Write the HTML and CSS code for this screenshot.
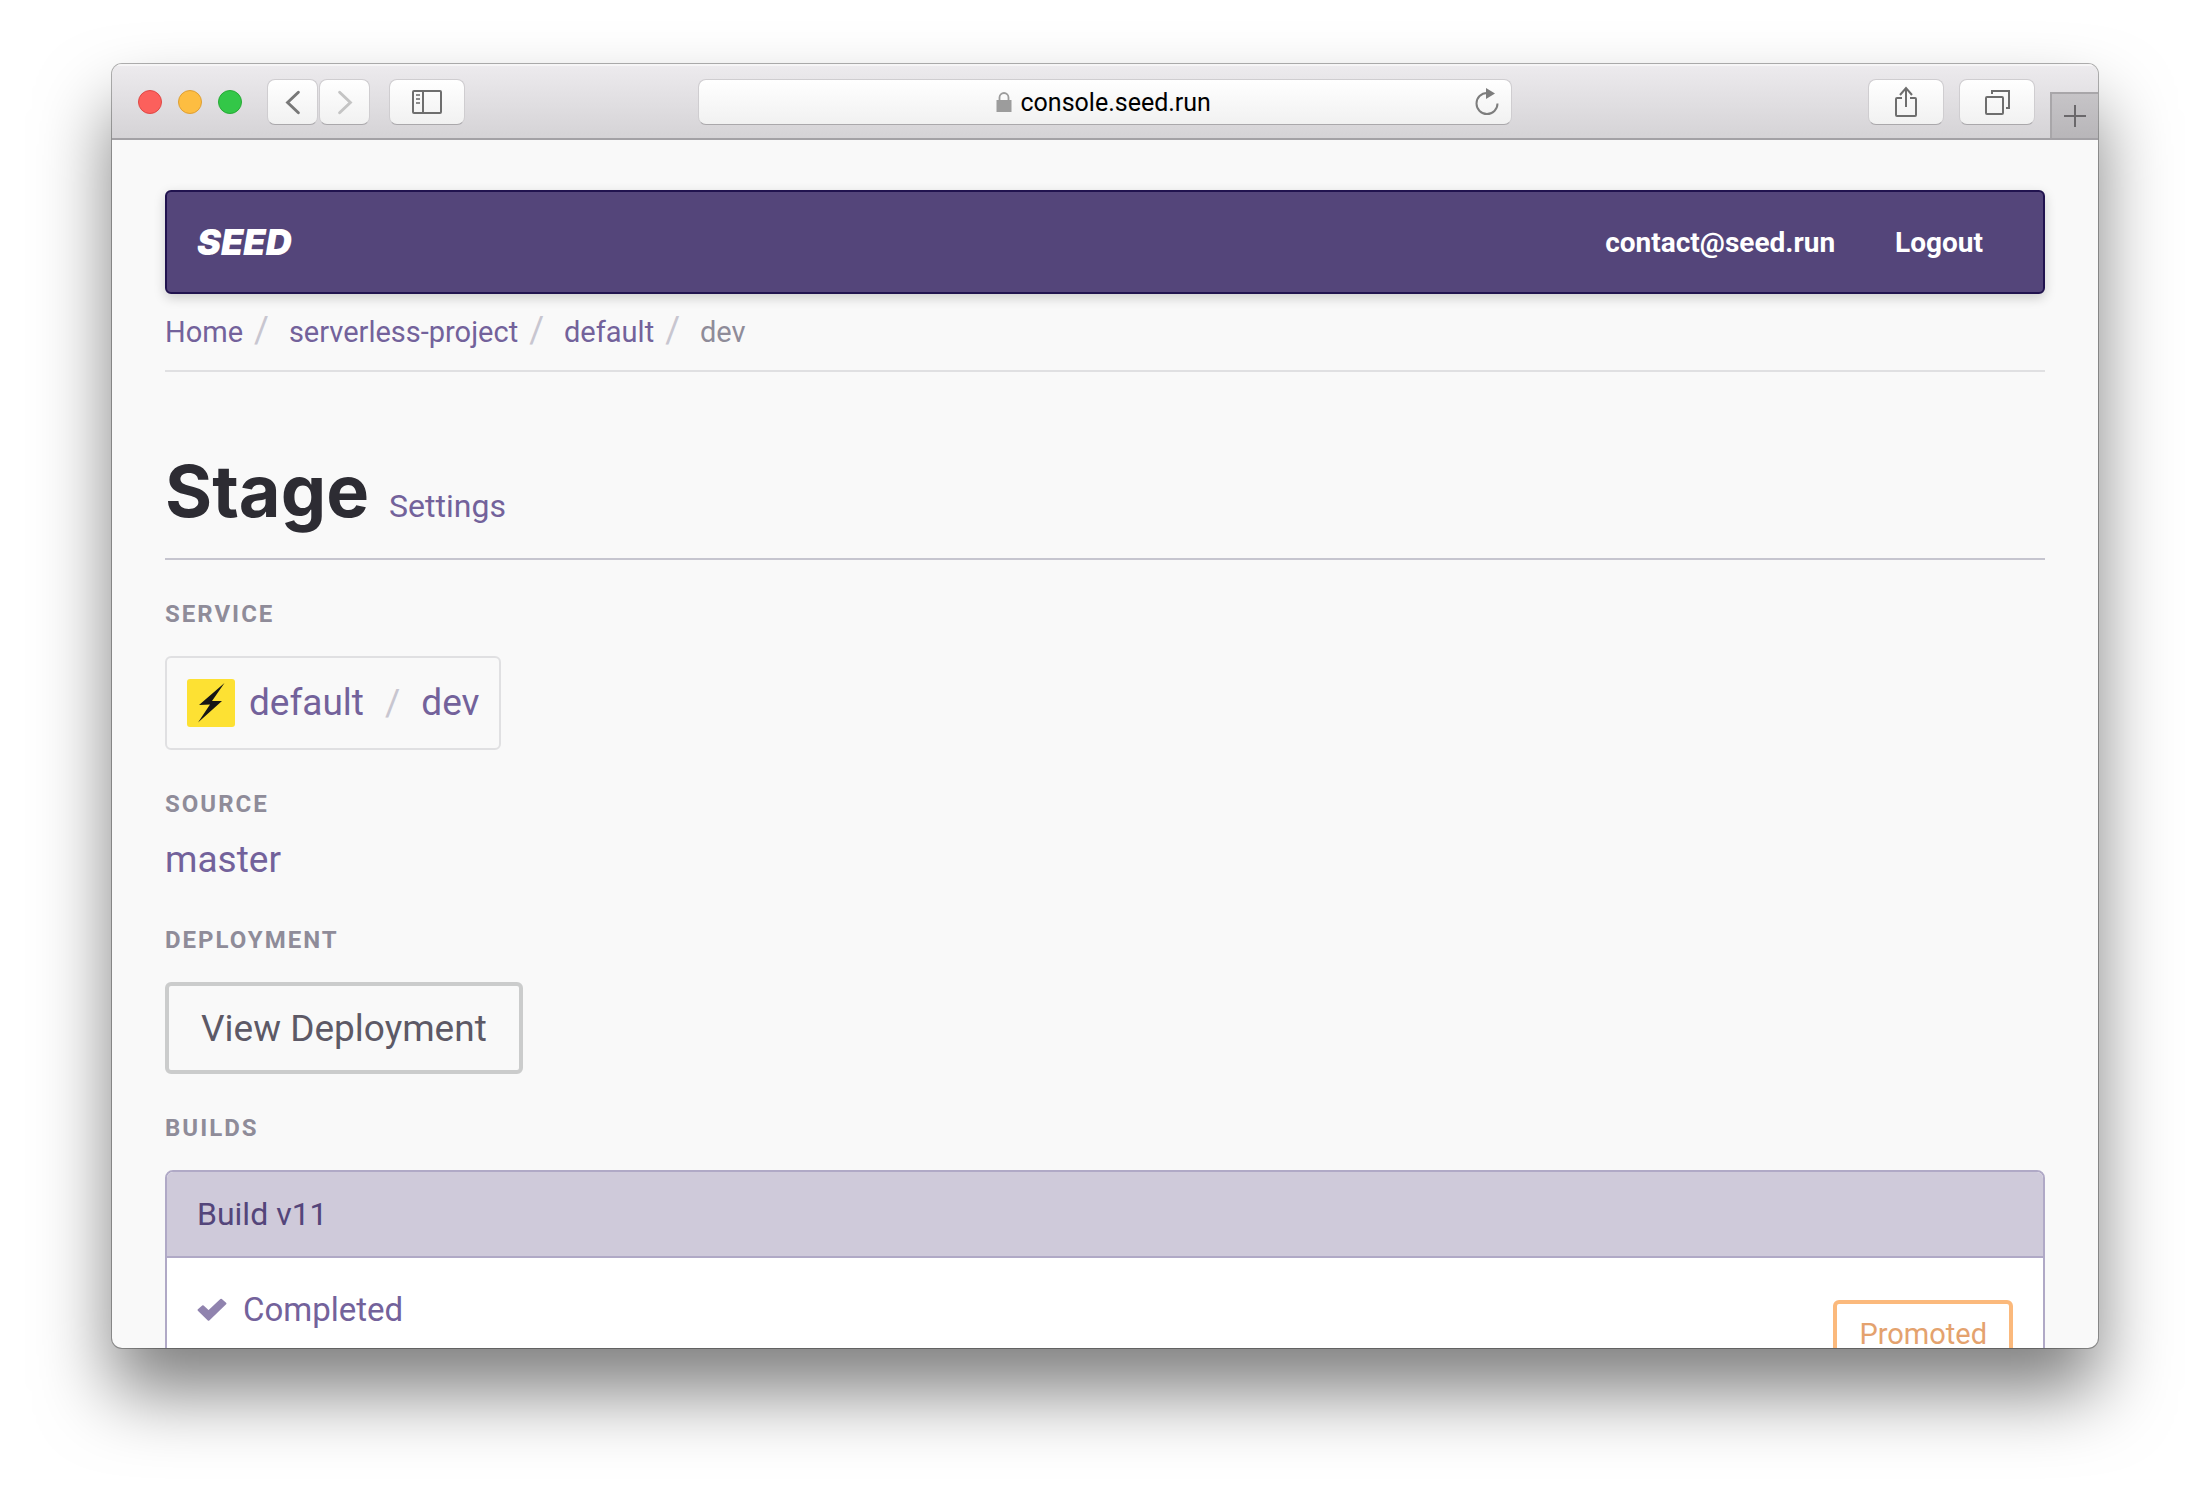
FILE: index.html
```
<!DOCTYPE html>
<html lang="en">
<head>
    <meta charset="UTF-8">
    <meta name="viewport" content="width=device-width, initial-scale=1.0">
    <title>Seed Console - Stage</title>
    <link rel="stylesheet" href="styles.css">
</head>
<body>
    <div class="window">
        <div class="toolbar">
            <div class="toolbar-side">
                <div class="lights">
                    <span class="light red"></span>
                    <span class="light yellow"></span>
                    <span class="light green"></span>
                </div>
                <div class="history">
                    <button class="tool-button small" aria-label="Back">
                        <svg width="50" height="44" viewBox="0 0 50 44" fill="none" stroke="#787878" stroke-width="3" stroke-linecap="round"><path d="M31 12L20 22.500L31 33"/></svg>
                    </button>
                    <button class="tool-button small" aria-label="Forward">
                        <svg width="50" height="44" viewBox="0 0 50 44" fill="none" stroke="#c4c4c4" stroke-width="3" stroke-linecap="round"><path d="M20 12L31 22.500L20 33"/></svg>
                    </button>
                </div>
                <button class="tool-button" aria-label="Sidebar">
                    <svg width="30" height="24" viewBox="0 0 30 24" fill="none" stroke="#6e6e6e" stroke-width="2"><rect x="1" y="1" width="28" height="22" rx="1"/><path d="M11 1v22"/><path d="M4 5h4M4 9h4M4 13h4" stroke="#8c8c8c"/></svg>
                </button>
            </div>
            <div class="address-bar">
                <div class="address">
                    <svg width="16" height="20" viewBox="0 0 16 20"><path d="M3.500 9V5.500a4.500 4.500 0 0 1 9 0V9" fill="none" stroke="#9c9c9c" stroke-width="1.800"/><rect x="0.500" y="8" width="15" height="12" fill="#9c9c9c"/></svg>
                    <input type="text" class="address-input" value="console.seed.run" aria-label="Address">
                </div>
                <button class="reload-button" aria-label="Reload">
                    <svg width="24" height="28" viewBox="0 0 24 28"><path d="M12 5a10.500 10.500 0 1 0 10.500 10.500" fill="none" stroke="#7d7d7d" stroke-width="2"/><path d="M11 0v11l9-5.500z" fill="#7d7d7d"/></svg>
                </button>
            </div>
            <div class="toolbar-side right">
                <button class="tool-button" aria-label="Share">
                    <svg width="24" height="32" viewBox="0 0 24 32" fill="none" stroke="#6e6e6e" stroke-width="2"><path d="M8 12H3a1 1 0 0 0-1 1v16a1 1 0 0 0 1 1h18a1 1 0 0 0 1-1V13a1 1 0 0 0-1-1h-5M12 21V3M6 9l6-7 6 7"/></svg>
                </button>
                <button class="tool-button" aria-label="Show tabs">
                    <svg width="26" height="26" viewBox="0 0 26 26" fill="none" stroke="#6e6e6e" stroke-width="2"><rect x="2" y="8" width="17" height="17" rx="1"/><path d="M8 5V2h17v17h-3"/></svg>
                </button>
                <button class="new-tab" aria-label="New tab">
                    <svg width="22" height="22" viewBox="0 0 22 22" stroke="#6a686b" stroke-width="2"><path d="M11 0v22M0 11h22"/></svg>
                </button>
            </div>
        </div>

        <div class="page">
            <nav class="navbar">
                <a href="#" class="brand">SEED</a>
                <div class="nav-links">
                    <a href="#">contact@seed.run</a>
                    <a href="#">Logout</a>
                </div>
            </nav>

            <div class="breadcrumb">
                <a href="#">Home</a>
                <span class="slash">/</span>
                <a href="#">serverless-project</a>
                <span class="slash">/</span>
                <a href="#">default</a>
                <span class="slash">/</span>
                <span class="current">dev</span>
            </div>

            <header class="page-header">
                <h1>Stage</h1>
                <a href="#">Settings</a>
            </header>

            <section class="section">
                <h2>Service</h2>
                <div class="service">
                    <svg class="service-icon" width="48" height="48" viewBox="0 0 48 48"><rect width="48" height="48" rx="3" fill="#fde133"/><path d="M37.500 4L12 26l11-0.500L11 43.500L35 22H25z" fill="#161616"/></svg>
                    <a href="#">default</a>
                    <span class="slash">/</span>
                    <a href="#">dev</a>
                </div>
            </section>

            <section class="section">
                <h2>Source</h2>
                <a href="#" class="source">master</a>
            </section>

            <section class="section">
                <h2>Deployment</h2>
                <button class="view-button">View Deployment</button>
            </section>

            <section class="section">
                <h2>Builds</h2>
                <div class="build">
                    <div class="build-header">Build v11</div>
                    <div class="build-body">
                        <a href="#" class="build-status">
                            <svg width="30" height="24" viewBox="0 0 28 22"><path d="M1.500 11L5.500 7.500L10.800 12.500L22.500 1.500L26.500 5L10.800 20z" fill="#9083ae" stroke="#9083ae" stroke-width="2" stroke-linejoin="round"/></svg>
                            Completed
                        </a>
                        <button class="promoted-button">Promoted</button>
                    </div>
                </div>
            </section>
        </div>
    </div>
</body>
</html>
```
FILE: styles.css
```
* {
    margin: 0;
    padding: 0;
    box-sizing: border-box;
    font-family: Roboto, 'Liberation Sans', sans-serif;
}

:root {
    --background: #f9f9f9;
    --purple: #73629b;
    --purple-dark: #54457a;
    --muted: #8f8c99;
    --slash: #c8c6d0;
}

body {
    background: #ffffff;
    height: 100vh;
    padding: 64px 112px 160px;
    overflow: hidden;
}

a {
    color: var(--purple);
    text-decoration: none;
}

button {
    cursor: pointer;
}

/* Browser window */
.window {
    height: 100%;
    display: flex;
    flex-direction: column;
    background: var(--background);
    border-radius: 10px;
    box-shadow: 0 0 0 1px rgba(0, 0, 0, 0.3), 0 44px 72px rgba(0, 0, 0, 0.5);
    overflow: hidden;
}

.toolbar {
    flex: none;
    display: flex;
    align-items: center;
    height: 76px;
    padding-top: 2px;
    background: linear-gradient(#edebee, #d5d3d6);
    border-bottom: 2px solid #a3a1a5;
    box-shadow: inset 0 2px 0 #f6f5f6;
}

.toolbar-side {
    flex: 1;
    height: 100%;
    display: flex;
    align-items: center;
    gap: 19px;
}

.toolbar-side.right {
    justify-content: flex-end;
    gap: 15px;
}

.lights {
    display: flex;
    gap: 16px;
    margin: 0 6px 0 26px;
}

.light {
    width: 24px;
    height: 24px;
    border-radius: 50%;
    border: 1px solid;
}

.red {
    background: #fc605c;
    border-color: #df4845;
}

.yellow {
    background: #fdbd41;
    border-color: #de9f34;
}

.green {
    background: #33c748;
    border-color: #27aa35;
}

.history {
    display: flex;
    gap: 1px;
}

.tool-button {
    display: flex;
    align-items: center;
    justify-content: center;
    width: 76px;
    height: 46px;
    background: linear-gradient(#ffffff, #f1f1f1);
    border: 1px solid #cfcdd0;
    border-bottom-color: #aaa8ab;
    border-radius: 8px;
}

.tool-button.small {
    width: 51px;
}

.address-bar {
    width: 41%;
    height: 46px;
    display: flex;
    align-items: center;
    background: linear-gradient(#ffffff, #f1f1f1);
    border: 1px solid #cfcdd0;
    border-bottom-color: #aaa8ab;
    border-radius: 8px;
    padding: 0 12px 0 36px;
}

.address {
    flex: 1;
    display: flex;
    align-items: center;
    justify-content: center;
    gap: 9px;
}

.address-input {
    width: 194px;
    padding-top: 2px;
    border: none;
    background: transparent;
    color: #000000;
    font-size: 25px;
    line-height: 32px;
}

.reload-button {
    display: flex;
    border: none;
    background: transparent;
}

.new-tab {
    align-self: flex-end;
    display: flex;
    align-items: center;
    justify-content: center;
    width: 48px;
    height: 46px;
    background: linear-gradient(#c6c4c7, #b8b6b9);
    border: 2px solid #a8a6a9;
    border-width: 2px 0 0 2px;
}

/* Console page */
.page {
    flex: 1;
    min-height: 0;
    overflow: hidden;
    padding: 50px 53px 0;
}

.navbar {
    display: flex;
    align-items: center;
    justify-content: space-between;
    height: 104px;
    padding: 0 60px 0 30px;
    background: var(--purple-dark);
    border: 2px solid #21134f;
    border-radius: 6px;
    box-shadow: 0 4px 12px rgba(0, 0, 0, 0.18);
}

.navbar a {
    color: #ffffff;
}

.brand {
    font-family: Inter, 'Liberation Sans', sans-serif;
    font-size: 36px;
    font-style: italic;
    font-weight: 900;
}

.nav-links {
    display: flex;
    gap: 60px;
    font-size: 28px;
    font-weight: 700;
}

.breadcrumb {
    display: flex;
    align-items: baseline;
    height: 78px;
    padding-top: 14px;
    border-bottom: 2px solid #e0e0e2;
    font-size: 29px;
    line-height: 44px;
}

.slash {
    color: var(--slash);
}

.breadcrumb .slash {
    margin: 0 20px 0 11px;
    font-size: 36px;
}

.current {
    color: var(--muted);
}

.page-header {
    display: flex;
    align-items: baseline;
    gap: 20px;
    padding: 76px 0 24px;
    border-bottom: 2px solid #c6c5cf;
    margin-bottom: 38px;
}

h1 {
    font-family: Inter, 'Liberation Sans', sans-serif;
    font-size: 72px;
    font-weight: 700;
    line-height: 86px;
    color: #2d2c33;
}

.page-header a {
    font-size: 32px;
}

.section {
    margin-bottom: 38px;
}

h2 {
    font-size: 24px;
    font-weight: 700;
    line-height: 32px;
    letter-spacing: 2px;
    text-transform: uppercase;
    color: var(--muted);
    margin-bottom: 26px;
}

.service {
    display: inline-flex;
    align-items: center;
    height: 94px;
    padding: 0 20px;
    border: 2px solid #e0e0e2;
    border-radius: 6px;
    font-size: 37px;
    line-height: 44px;
    vertical-align: top;
}

.service-icon {
    margin-right: 14px;
}

.service .slash {
    margin: 0 21px;
}

.source {
    display: block;
    margin-top: -12px;
    font-size: 37px;
    line-height: 52px;
}

.view-button {
    display: block;
    height: 92px;
    padding: 0 32px;
    background: transparent;
    border: 4px solid #cbcccc;
    border-radius: 6px;
    color: #5d5966;
    font-size: 37px;
}

.build {
    border: 2px solid #b0a9c6;
    border-radius: 8px 8px 0 0;
    background: #ffffff;
    overflow: hidden;
}

.build-header {
    padding: 20px 30px;
    background: #cfcada;
    border-bottom: 2px solid #b0a9c6;
    color: var(--purple-dark);
    font-size: 32px;
    line-height: 44px;
}

.build-body {
    display: flex;
    align-items: flex-start;
    justify-content: space-between;
    padding: 30px;
}

.build-status {
    display: flex;
    align-items: center;
    gap: 16px;
    font-size: 33px;
    line-height: 44px;
}

.promoted-button {
    margin-top: 12px;
    height: 68px;
    padding: 0 22px;
    background: transparent;
    border: 4px solid #fbb97c;
    border-radius: 6px;
    color: #e4a26e;
    font-size: 29px;
}
```
